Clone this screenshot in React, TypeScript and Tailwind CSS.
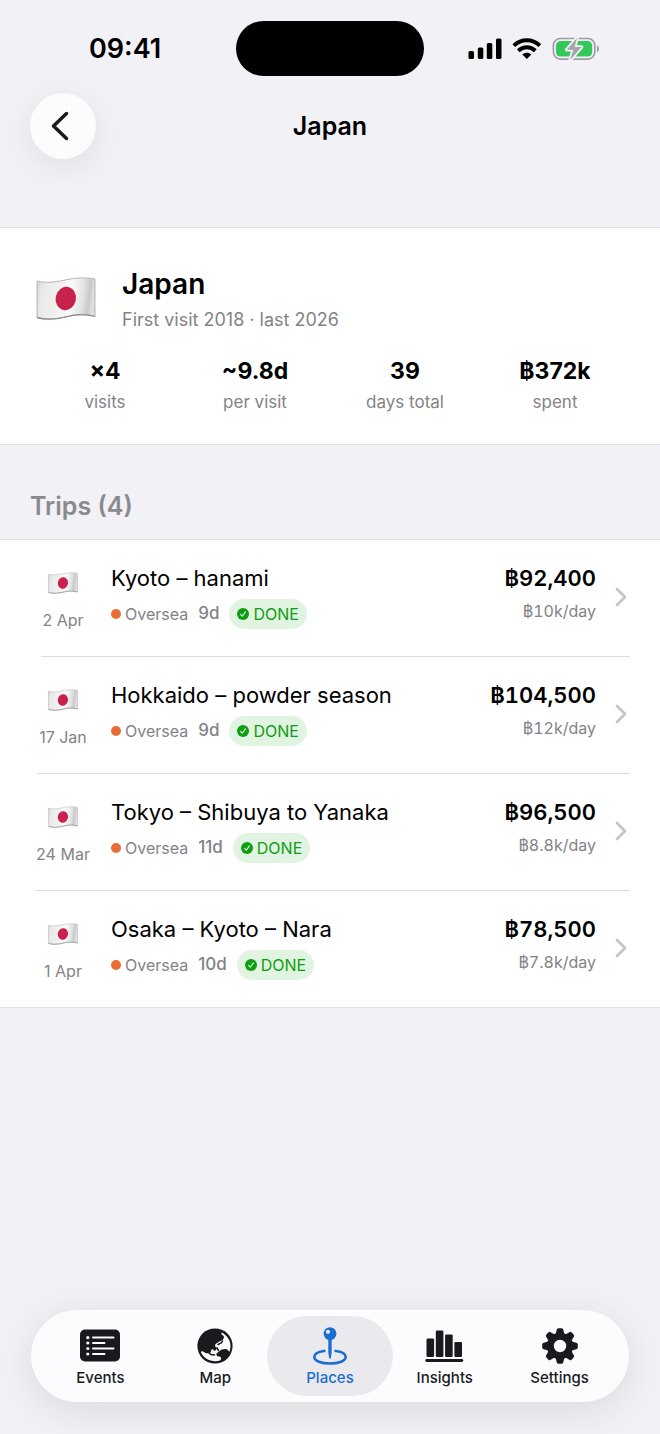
import React from 'react';

type Trip = {
  title: string;
  date: string;
  days: string;
  total: string;
  perDay: string;
  divider: string;
};

const stats = [
  { value: '×4', label: 'visits' },
  { value: '~9.8d', label: 'per visit' },
  { value: '39', label: 'days total' },
  { value: '฿372k', label: 'spent' },
];

// the divider starts under the first letter of the date
const trips: Trip[] = [
  { title: 'Kyoto – hanami', date: '2 Apr', days: '9d', total: '฿92,400', perDay: '฿10k/day', divider: 'ml-[41px]' },
  { title: 'Hokkaido – powder season', date: '17 Jan', days: '9d', total: '฿104,500', perDay: '฿12k/day', divider: 'ml-[38px]' },
  { title: 'Tokyo – Shibuya to Yanaka', date: '24 Mar', days: '11d', total: '฿96,500', perDay: '฿8.8k/day', divider: 'ml-[35px]' },
  { title: 'Osaka – Kyoto – Nara', date: '1 Apr', days: '10d', total: '฿78,500', perDay: '฿7.8k/day', divider: '' },
];

const Flag = ({ className, id }: { className: string; id: string }) => (
  <svg className={className} viewBox="0 0 60 43" aria-hidden="true">
    <defs>
      <linearGradient id={id} x1="0" x2="1" y1="0" y2="0.08">
        <stop offset="0" stopColor="#cfcfcf" />
        <stop offset="0.1" stopColor="#e9e9e9" />
        <stop offset="0.38" stopColor="#f1f1f1" />
        <stop offset="0.62" stopColor="#fafafa" />
        <stop offset="0.82" stopColor="#e2e2e2" />
        <stop offset="0.93" stopColor="#c9c9c9" />
        <stop offset="1" stopColor="#dedede" />
      </linearGradient>
    </defs>
    <path
      d="M1 4C10 6.500 20 5 29 3C39 .8 49 .2 59 2V39.500C49 36.500 39 37.500 30 39.800C20 42.300 10 43 1 40.500Z"
      fill={`url(#${id})`}
      stroke="#b5b5b5"
      strokeWidth="1"
    />
    <path d="M1 40.500C10 43 20 42.300 30 39.800C39 37.500 49 36.500 59 39.500" fill="none" stroke="#8e8e8e" strokeWidth="1.300" />
    <ellipse cx="29.800" cy="21.500" rx="10.200" ry="11.700" fill="#c8214b" transform="rotate(12 29.800 21.500)" />
  </svg>
);

const StatusIcons = () => (
  <svg className="h-[26px] w-[132px]" viewBox="0 0 132 26" aria-hidden="true">
    {/* signal */}
    <rect x="0.500" y="15" width="5.500" height="8" rx="1.600" />
    <rect x="9.800" y="11.500" width="5.500" height="11.500" rx="1.600" />
    <rect x="18.800" y="7" width="5.500" height="16" rx="1.600" />
    <rect x="28" y="2.500" width="5.500" height="20.500" rx="1.600" />
    {/* wifi */}
    <g fill="none" stroke="#000" strokeWidth="3.900">
      <path d="M45.800 9.700C53.300 2.500 64.300 2.500 71.800 9.700" />
      <path d="M50.300 14.700C55.300 10.100 62.300 10.100 67.300 14.700" />
    </g>
    <path d="M58.800 23L54.300 18.600C57 16.200 60.600 16.200 63.300 18.600Z" />
    {/* battery */}
    <rect x="85.400" y="2.500" width="41.400" height="20.600" rx="7" fill="none" stroke="#9f9da4" strokeWidth="1.600" />
    <path d="M129 9.500c2.600.8 2.600 6 0 6.800Z" fill="#9f9da4" />
    <rect x="88" y="5.100" width="36.200" height="15.400" rx="4.500" fill="#34c759" />
    <path
      d="M109 2L98.800 13.800H105.200L102.200 24L113.500 11H106.600Z"
      fill="#a5a3aa"
      stroke="#f1f1f6"
      strokeWidth="3.600"
      strokeLinejoin="round"
      paintOrder="stroke"
    />
  </svg>
);

const EventsIcon = () => (
  <svg className="h-9 w-10" viewBox="0 0 40 36" aria-hidden="true">
    <rect y="1.500" width="40" height="32" rx="5" fill="currentColor" />
    <g fill="#fcfcff">
      <circle cx="7.800" cy="9.600" r="1.600" />
      <circle cx="7.800" cy="15" r="1.600" />
      <circle cx="7.800" cy="20.500" r="1.600" />
      <circle cx="7.800" cy="26" r="1.600" />
    </g>
    <path d="M13 9.600H33.500M13 15H24.500M13 20.500H33.500M13 26H24.500" stroke="#fcfcff" strokeWidth="2" strokeLinecap="round" />
  </svg>
);

const MapIcon = () => (
  <svg className="size-9" viewBox="0 0 36 36" aria-hidden="true">
    <circle cx="18" cy="18" r="17.600" fill="currentColor" />
    <path
      d="M24.500 4.500C30 7 33.800 12.500 33.500 18.500C33.400 20.500 33 22.300 32.300 24C31 21.500 29 20.300 27 21.200L24.500 21.500C23 23 21 24 19.500 25.500C19 27.500 20 28.500 22 28.600C24 28.500 24.500 30.500 23.500 32.300C16 35 7.500 31.500 4 24.500C4 23 5 23 6 23.500C8 25 10 25.500 12 25.300C14 25 14 23 14.500 21.500C16 20.500 17 22.500 18 22.500C20 21 20.500 19.500 18.500 19L18 17C19 15 21 14.500 22.500 13.500C25 12.500 26.500 11.500 27 9.500C27 8 26 7 24.500 6.500Z"
      fill="#fcfcff"
    />
    <path
      d="M21 16.500L24.500 14.800L25.500 13M17 19.500L17.500 22M10.500 23.500L14 26.500L17.500 27M20 20L21.500 22.500"
      fill="none"
      stroke="currentColor"
      strokeWidth="1.500"
      strokeLinecap="round"
    />
  </svg>
);

const PlacesIcon = () => (
  <svg className="h-[38px] w-9" viewBox="0 0 36 38" aria-hidden="true">
    <path d="M13.500 23.800C6.500 24.500 2.300 27 2.300 30.100C2.300 33.900 9.200 36.500 18 36.500C26.800 36.500 33.700 33.900 33.700 30.100C33.700 27 29.500 24.500 22.500 23.800" fill="none" stroke="currentColor" strokeWidth="2.600" />
    <path d="M16.300 11H19.700V26L18.700 31.500H17.300L16.300 26Z" fill="currentColor" />
    <circle cx="18" cy="6.600" r="6.400" fill="currentColor" />
    <circle cx="16" cy="4.800" r="2.100" fill="#eaeaee" />
  </svg>
);

const InsightsIcon = () => (
  <svg className="h-9 w-10" viewBox="0 0 40 36" fill="currentColor" aria-hidden="true">
    <rect x="1.500" y="10.500" width="7.600" height="18.500" rx="1.200" />
    <rect x="10.800" y="2.500" width="7.600" height="26.500" rx="1.200" />
    <rect x="20.100" y="6.500" width="7.600" height="22.500" rx="1.200" />
    <rect x="29.400" y="14" width="7.600" height="15" rx="1.200" />
    <rect x="0.300" y="31" width="38" height="2.900" rx="1.400" />
  </svg>
);

const SettingsIcon = () => (
  <svg className="size-9" viewBox="0 0 36 36" aria-hidden="true">
    <circle cx="18" cy="18" r="9.700" fill="none" stroke="currentColor" strokeWidth="7" />
    {[0, 45, 90, 135, 180, 225, 270, 315].map((angle) => (
      <path
        key={angle}
        d="M13.500 6.500L14.800 1.600Q15.200 0.200 16.500 0.200H19.500Q20.800 0.200 21.200 1.600L22.500 6.500Z"
        fill="currentColor"
        transform={`rotate(${angle} 18 18)`}
      />
    ))}
  </svg>
);

const tabs = [
  { label: 'Events', icon: EventsIcon },
  { label: 'Map', icon: MapIcon },
  { label: 'Places', icon: PlacesIcon, active: true },
  { label: 'Insights', icon: InsightsIcon },
  { label: 'Settings', icon: SettingsIcon },
];

const TripRow = ({ trip, index }: { trip: Trip; index: number }) => (
  <li>
    <a href="#" className="flex h-[116px] items-start pr-[33px] pl-[31px]">
      <div className="flex w-16 shrink-0 flex-col items-center pt-8">
        <Flag className="h-[22px] w-[30px]" id={`flag-${index}`} />
        <span className="mt-4 text-base leading-5 whitespace-nowrap text-[#838386]">{trip.date}</span>
      </div>

      <div className="min-w-0 flex-1 pt-6 pl-4">
        <h3 className="truncate text-[22px] leading-7">{trip.title}</h3>
        <div className="mt-[7px] flex items-center text-base text-[#838386]">
          <span className="mr-1 size-[10px] rounded-full bg-[#e96b35]" />
          <span>Oversea</span>
          <span className="ml-[10px] text-[17px] font-medium">{trip.days}</span>
          <span className="ml-[10px] flex h-[30px] items-center gap-1 rounded-full bg-[#e1f4e1] px-2 text-[#0f9d12]">
            <svg className="size-3" viewBox="0 0 12 12" aria-hidden="true">
              <circle cx="6" cy="6" r="6" fill="#0f9d12" />
              <path d="M3.600 6.300L5.300 8.200L8.400 3.900" fill="none" stroke="#e1f4e1" strokeWidth="1.100" strokeLinecap="round" strokeLinejoin="round" />
            </svg>
            DONE
          </span>
        </div>
      </div>

      <div className="flex flex-col items-end pt-6 tabular-nums">
        <span className="text-[22px] leading-7 font-semibold">{trip.total}</span>
        <span className="mt-[7px] text-base leading-6 text-[#838386]">{trip.perDay}</span>
      </div>

      <svg className="ml-[19px] h-[116px] w-3 shrink-0" viewBox="0 0 12 116" fill="none" aria-hidden="true">
        <path d="M2 49L10 57L2 65" stroke="#c5c5c7" strokeWidth="2.800" strokeLinecap="round" strokeLinejoin="round" />
      </svg>
    </a>
    {trip.divider && <div className={`mr-[30px] h-px bg-[#dcdcdf] ${trip.divider}`} />}
  </li>
);

const App = () => {
  return (
    <div className="flex min-h-screen flex-col bg-[#f1f1f6] font-['Inter',sans-serif] text-black">
      {/* Status bar */}
      <div className="grid grid-cols-[1fr_188px_1fr] items-center pt-[21px]">
        <span className="pl-[89px] text-[27px] leading-8 font-semibold">09:41</span>
        <div className="h-[55px] rounded-full bg-black" />
        <div className="flex justify-end pr-[60px]">
          <StatusIcons />
        </div>
      </div>

      {/* Header */}
      <header className="mt-[17px] grid grid-cols-[66px_1fr_66px] items-center px-[30px]">
        <button
          type="button"
          aria-label="Back"
          className="flex size-[66px] items-center justify-center rounded-full bg-[#fcfcff] shadow-[0_8px_36px_rgba(0,0,0,0.08)]"
        >
          <svg className="h-8 w-6" viewBox="0 0 24 32" fill="none" aria-hidden="true">
            <path d="M15.500 3.500L2.500 16L15.500 28.500" stroke="#1a1a1e" strokeWidth="3.500" strokeLinecap="round" strokeLinejoin="round" />
          </svg>
        </button>
        <h1 className="text-center text-[25px] leading-8 font-semibold">Japan</h1>
      </header>

      <main>
        {/* Country summary */}
        <section className="mt-[68px] border-y border-[#e3e3e6] bg-white px-[30px] pt-[38px] pb-[30px]">
          <div className="flex items-center">
            <Flag className="mb-1 ml-[6px] h-[43px] w-[60px]" id="flag-summary" />
            <div className="ml-[26px]">
              <h2 className="text-[28px] leading-9 font-semibold">Japan</h2>
              <p className="mt-1 text-lg leading-7 text-[#838386]">First visit 2018 · last 2026</p>
            </div>
          </div>
          <dl className="mt-[23px] grid grid-cols-4 text-center">
            {stats.map((stat) => (
              <div key={stat.label} className="flex flex-col-reverse">
                <dt className="mt-[5px] text-[17px] leading-6 text-[#838386]">{stat.label}</dt>
                <dd className="text-[23px] leading-7 font-bold">{stat.value}</dd>
              </div>
            ))}
          </dl>
        </section>

        {/* Trips */}
        <section>
          <h2 className="px-[30px] pt-[45px] pb-[17px] text-[25px] leading-8 font-semibold text-[#8a8a8e]">Trips (4)</h2>
          <ul className="border-y border-[#e3e3e6] bg-white">
            {trips.map((trip, index) => (
              <TripRow key={trip.title} trip={trip} index={index} />
            ))}
          </ul>
        </section>
      </main>

      {/* Tab bar */}
      <nav className="mx-[31px] mt-auto mb-8 flex rounded-full bg-[#fcfcff] px-3 py-[6px] shadow-[0_8px_44px_rgba(0,0,0,0.1)]">
        {tabs.map(({ label, icon: Icon, active }) => (
          <a key={label} href="#" aria-current={active ? 'page' : undefined} className="flex-1">
            <span
              className={`-mx-[6px] flex h-20 flex-col items-center rounded-full pt-3 ${
                active ? 'bg-[#eaeaee] text-[#1c6dd0]' : 'text-[#1a1a1e]'
              }`}
            >
              <span className="flex h-9 items-center">
                <Icon />
              </span>
              <span className="mt-1 text-[15px] leading-5 font-medium">{label}</span>
            </span>
          </a>
        ))}
      </nav>
    </div>
  );
};

export default App;
